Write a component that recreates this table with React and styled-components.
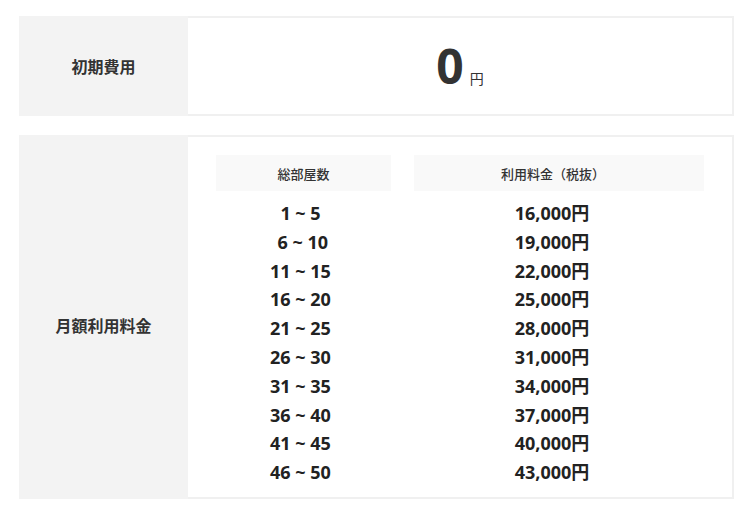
import styled, { createGlobalStyle } from 'styled-components';

const GlobalStyle = createGlobalStyle`
  body {
    margin: 0;
    background: #fff;
    font-family: "Noto Sans", "Noto Sans CJK JP", sans-serif;
    color: #333;
  }
`;

const plans = [
  ['1 ~ 5', '16,000'],
  ['\u00a06 ~ 10', '19,000'],
  ['11 ~ 15', '22,000'],
  ['16 ~ 20', '25,000'],
  ['21 ~ 25', '28,000'],
  ['26 ~ 30', '31,000'],
  ['31 ~ 35', '34,000'],
  ['36 ~ 40', '37,000'],
  ['41 ~ 45', '40,000'],
  ['46 ~ 50', '43,000'],
];

function App(){
  return (
    <S.Page>
      <GlobalStyle />
      <S.Block>
        <S.Label>初期費用</S.Label>
        <S.Value center={true}>
          <S.Big>0</S.Big>
          <S.Yen>円</S.Yen>
        </S.Value>
      </S.Block>

      <S.Block>
        <S.Label shift={true}>月額利用料金</S.Label>
        <S.Value>
          <S.Table>
            <S.Head>総部屋数</S.Head>
            <S.Head right={true}>利用料金（税抜）</S.Head>
            {plans.map(([rooms, price]) => (
              <S.Row key={rooms}>
                <S.Cell>{rooms}</S.Cell>
                <S.Cell right={true}>{price}円</S.Cell>
              </S.Row>
            ))}
          </S.Table>
        </S.Value>
      </S.Block>
    </S.Page>
  );
}

export default App;

const S = {};

S.Page = styled.div`
  padding: 16px 16px 0 19px;
  display: flex;
  flex-direction: column;
  gap: 19px;
`;

S.Block = styled.div`
  width: 715px;
  display: flex;
`;

S.Label = styled.div`
  width: 169px;
  flex-shrink: 0;
  background: #f3f3f3;
  display: flex;
  align-items: center;
  justify-content: center;
  font-size: 16px;
  font-weight: bold;
  color: #333;
  ${props => props.shift ? 'padding-top: 16px;' : ''}
`;

S.Value = styled.div`
  flex-grow: 1;
  border: 2px solid #f0f0f0;
  border-left: none;
  ${props => props.center
    ? 'height: 96px; display: flex; align-items: baseline; justify-content: center; padding-top: 0;'
    : 'padding: 18px 28px 10px 28px;'}
`;

S.Big = styled.span`
  font-size: 48px;
  font-weight: bold;
  line-height: 96px;
  color: #333;
`;

S.Yen = styled.span`
  font-size: 14px;
  margin-left: 6px;
  color: #333;
`;

S.Table = styled.div`
  display: grid;
  grid-template-columns: 175px 290px;
  column-gap: 23px;
`;

S.Head = styled.div`
  height: 36px;
  margin-bottom: 8px;
  background: #f9f9f9;
  display: flex;
  align-items: center;
  justify-content: center;
  font-size: 13px;
  font-weight: 500;
  color: #333;
  ${props => props.right ? 'padding-right: 12px;' : ''}
`;

S.Row = styled.div`
  display: contents;
`;

S.Cell = styled.div`
  text-align: center;
  font-size: 18px;
  font-weight: bold;
  line-height: 28.8px;
  color: #222;
  padding-right: ${props => props.right ? 14 : 6}px;
`;
